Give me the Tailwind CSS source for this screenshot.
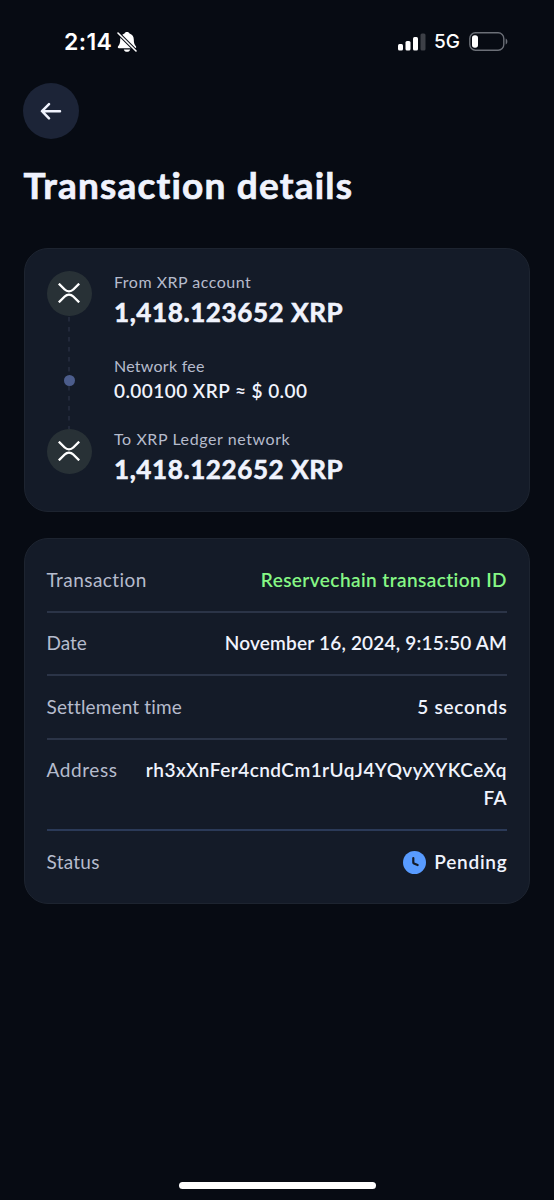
<!DOCTYPE html>
<html lang="en">
<head>
<meta charset="utf-8">
<meta name="viewport" content="width=device-width, initial-scale=1">
<title>Transaction details</title>
<script src="https://cdn.jsdelivr.net/npm/@tailwindcss/browser@4"></script>
</head>
<body class="bg-[#070b13]">
<div class="flex h-[1200px] w-[554px] flex-col bg-[#070b13] font-[Lato,sans-serif] text-[#f0f3fd]">

  <!-- Status bar -->
  <header class="flex h-[83px] shrink-0 items-center justify-between pr-[46px] pl-[64px] text-white">
    <div class="flex items-center gap-[5px]">
      <span class="font-[Inter,sans-serif] text-[23px] leading-7 font-semibold tracking-[0.4px]">2:14</span>
      <svg class="h-[22px] w-[20px]" viewBox="0 0 20 22" fill="none">
        <path d="M10 1C8.600 1 7.700 1.700 7.500 2.500C4.600 3.500 3.200 5.700 3.200 8.500C3.200 12 2.600 13.400 1.100 15.200C.5 16 .8 17.200 1.900 17.200H18.100C19.200 17.200 19.500 16 18.900 15.200C17.400 13.400 16.800 12 16.800 8.500C16.800 5.700 15.400 3.500 12.500 2.500C12.300 1.700 11.400 1 10 1Z" fill="#fff"/>
        <path d="M6.800 18.500H13.200C12.800 20 11.600 20.800 10 20.800C8.400 20.800 7.200 20 6.800 18.500Z" fill="#fff"/>
        <path d="M.2 1.200L19.500 20.500" stroke="#070b13" stroke-width="3.600"/>
        <path d="M1 2L19 20" stroke="#fff" stroke-width="1.600" stroke-linecap="round"/>
      </svg>
    </div>
    <div class="flex items-center">
      <svg class="h-[18px] w-[28px]" viewBox="0 0 28 18">
        <rect x="0" y="11" width="5" height="6.500" rx="1.500" fill="#fff"/>
        <rect x="7.500" y="8" width="5" height="9.500" rx="1.500" fill="#fff"/>
        <rect x="15" y="4" width="5" height="13.500" rx="1.500" fill="#fff"/>
        <rect x="22.500" y="0.500" width="5" height="17" rx="1.500" fill="#3d4047"/>
      </svg>
      <span class="ml-[8px] font-[Inter,sans-serif] text-[19px] leading-6 font-medium">5G</span>
      <svg class="ml-[9px] h-[20px] w-[39px]" viewBox="0 0 39 20" fill="none">
        <rect x=".8" y=".8" width="34" height="17.400" rx="5.600" stroke="#6b6f77" stroke-width="1.400"/>
        <rect x="3" y="3.200" width="6" height="12.600" rx="2.800" fill="#fff"/>
        <path d="M36.700 6.500V12.500C38.900 11.700 38.900 7.300 36.700 6.500Z" fill="#6b6f77"/>
      </svg>
    </div>
  </header>

  <!-- Back button and heading -->
  <button class="ml-[23px] flex size-14 shrink-0 items-center justify-center rounded-full bg-[#1c2437]" aria-label="Back">
    <svg class="h-[18px] w-[22px]" viewBox="0 0 22 18" fill="none" stroke="#f0f3fd" stroke-width="2.500" stroke-linecap="round" stroke-linejoin="round">
      <path d="M20 9.200H2.200M9 2.100L2 9.200L9 16.300"/>
    </svg>
  </button>
  <h1 class="mt-[22px] ml-[23.500px] shrink-0 text-[37px] leading-[48px] font-bold tracking-[1.2px] whitespace-nowrap [-webkit-text-stroke:0.7px_#f0f3fd]">Transaction details</h1>

  <main class="mt-[39px] flex flex-col gap-[26px] pr-6 pl-6">
    <!-- Transfer summary -->
    <section class="flex h-[264px] gap-[22.500px] rounded-[24px] border border-[#1d2430] bg-[#141b28] px-[21.500px] pt-[21.500px]">
      <div class="flex w-[45px] flex-col items-center">
        <div class="flex size-[45px] items-center justify-center rounded-full bg-[#283136]">
          <svg class="h-[20px] w-[22px]" viewBox="0 0 22 20" fill="none" stroke="#fff" stroke-width="2.400">
            <path d="M.8 .7L6.700 6.500C9.200 8.900 12.800 8.900 15.300 6.500L21.200 .7M.8 19.300L6.700 13.500C9.200 11.100 12.800 11.100 15.300 13.500L21.200 19.300"/>
          </svg>
        </div>
        <svg class="h-[59px] w-[2px]" viewBox="0 0 2 59"><path d="M1 1V59" stroke="#272f40" stroke-width="1.500" stroke-dasharray="4.500 5.500"/></svg>
        <div class="size-[11px] rounded-full bg-[#4c5d8c]"></div>
        <svg class="h-[43px] w-[2px]" viewBox="0 0 2 43"><path d="M1 0V43" stroke="#272f40" stroke-width="1.500" stroke-dasharray="4.500 5.500"/></svg>
        <div class="flex size-[45px] items-center justify-center rounded-full bg-[#283136]">
          <svg class="h-[20px] w-[22px]" viewBox="0 0 22 20" fill="none" stroke="#fff" stroke-width="2.400">
            <path d="M.8 .7L6.700 6.500C9.200 8.900 12.800 8.900 15.300 6.500L21.200 .7M.8 19.300L6.700 13.500C9.200 11.100 12.800 11.100 15.300 13.500L21.200 19.300"/>
          </svg>
        </div>
      </div>
      <div class="flex flex-col whitespace-nowrap">
        <p class="text-[16px] leading-[21px] tracking-[0.5px] text-[#b6bccd]">From XRP account</p>
        <p class="text-[26px] leading-[40px] font-bold tracking-[0.6px] [-webkit-text-stroke:0.6px_#f0f3fd]">1,418.123652 XRP</p>
        <p class="mt-[22px] text-[16px] leading-6 tracking-[0.25px] text-[#b6bccd]">Network fee</p>
        <p class="text-[19px] leading-[26px] font-semibold tracking-[0.43px]">0.00100 XRP ≈ $ 0.00</p>
        <p class="mt-6 text-[16px] leading-[22px] tracking-[0.58px] text-[#b6bccd]">To XRP Ledger network</p>
        <p class="text-[26px] leading-[39px] font-bold tracking-[0.6px] [-webkit-text-stroke:0.6px_#f0f3fd]">1,418.122652 XRP</p>
      </div>
    </section>

    <!-- Transaction properties -->
    <section class="flex h-[366px] flex-col rounded-[24px] border border-[#1d2430] bg-[#141b28] pt-[10px] pr-[22px] pl-[21.500px] text-[19px] leading-7">
      <div class="flex h-[64px] justify-between border-b-2 border-[#2b3447] pt-[17px]">
        <span class="tracking-[0.45px] text-[#b6bccd]">Transaction</span>
        <span class="font-semibold tracking-[0.42px] text-[#86f785]">Reservechain transaction ID</span>
      </div>
      <div class="flex h-[63px] justify-between border-b-2 border-[#2b3447] pt-[16px]">
        <span class="text-[#b6bccd]">Date</span>
        <span class="font-semibold tracking-[0.2px]">November 16, 2024, 9:15:50 AM</span>
      </div>
      <div class="flex h-[64px] justify-between border-b-2 border-[#2b3447] pt-[17px]">
        <span class="tracking-[0.15px] text-[#b6bccd]">Settlement time</span>
        <span class="-mr-[0.500px] font-semibold tracking-[0.75px]">5 seconds</span>
      </div>
      <div class="flex h-[91px] justify-between border-b-2 border-[#2b3a58] pt-[16px]">
        <span class="tracking-[0.6px] text-[#b6bccd]">Address</span>
        <span class="text-right font-semibold tracking-[0.46px]">rh3xXnFer4cndCm1rUqJ4YQvyXYKCeXq<br>FA</span>
      </div>
      <div class="flex justify-between pt-[17px]">
        <span class="tracking-[0.25px] text-[#b6bccd]">Status</span>
        <span class="-mr-[0.500px] flex items-center gap-2 font-semibold tracking-[0.75px]">
          <svg class="size-[23px]" viewBox="0 0 23 23" fill="none">
            <circle cx="11.500" cy="11.500" r="11.500" fill="#589bff"/>
            <path d="M10.300 7V11.400Q10.300 12.200 11 12.500L14.600 14" stroke="#141b28" stroke-width="2.200" stroke-linecap="round" stroke-linejoin="round"/>
          </svg>
          Pending
        </span>
      </div>
    </section>
  </main>

  <!-- Home indicator -->
  <div class="mt-auto mb-[11px] h-[7px] w-[197px] shrink-0 self-center rounded-full bg-white"></div>
</div>
</body>
</html>
